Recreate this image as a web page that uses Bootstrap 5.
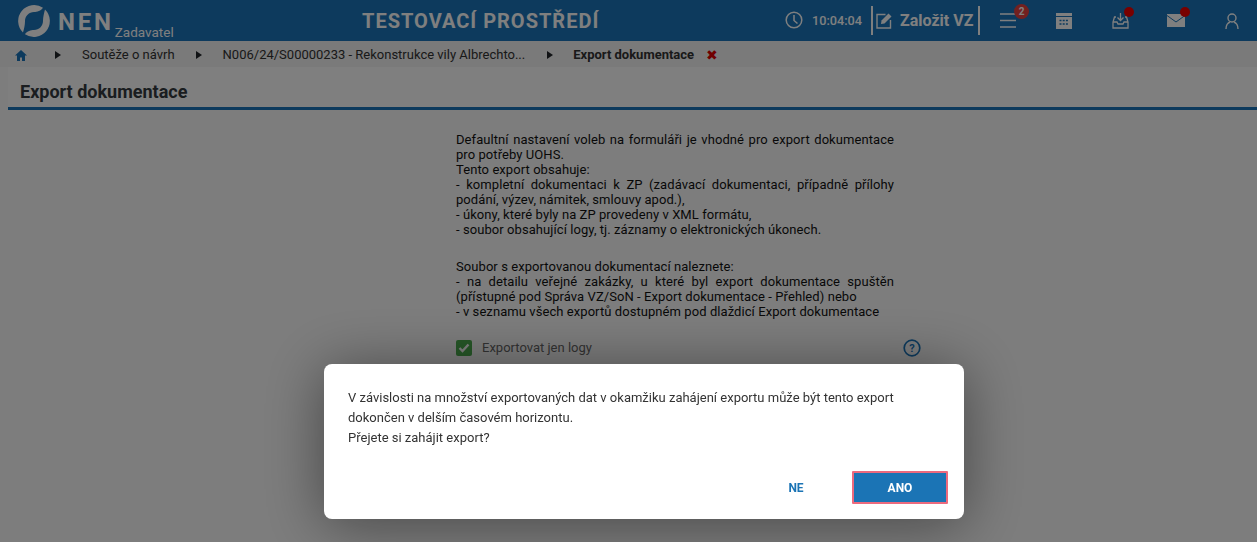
<!DOCTYPE html>
<html lang="cs">
<head>
    <meta charset="UTF-8" />
    <meta name="viewport" content="width=device-width, initial-scale=1" />
    <title>Export dokumentace</title>
    <link href="https://cdn.jsdelivr.net/npm/bootstrap@5.3.7/dist/css/bootstrap.min.css" rel="stylesheet" />
    <style>
        html, body { height: 542px; overflow: hidden; }
        body { font-family: Roboto, "Liberation Sans", sans-serif; background: #fbfbfb; color: #212529; }
        .top-head { height: 41px; background: #1a75bb; color: #fff; }
        .logo-zone { width: 180px; padding-left: 18px; }
        .logo-word { font-size: 24px; font-weight: 700; letter-spacing: 2.8px; line-height: 1; margin-left: 8px; margin-top: 2px; }
        .logo-role { font-size: 13.5px; align-self: flex-end; margin-left: 1px; line-height: 1; margin-bottom: 2px; }
        .env-title { width: 240px; margin-left: 182px; font-size: 20px; font-weight: 700; letter-spacing: 1px; white-space: nowrap; }
        .head-tools { margin-left: auto; margin-right: -3px; }
        .clock-box { font-size: 12.7px; font-weight: 500; width: 100px; padding-left: 14px; }
        .clock-box svg { margin-right: 9px; }
        .add-box { border-left: 2px solid #fff; border-right: 2px solid #fff; height: 29px; width: 109px; font-size: 16px; font-weight: 700; padding-left: 3px; white-space: nowrap; }
        .add-box svg { margin-right: 7px; }
        .tool-item { width: 56px; height: 41px; position: relative; }
        .dot-red { position: absolute; width: 10px; height: 10px; border-radius: 50%; background: #f00000; top: 7px; left: 32px; }
        .count-red { position: absolute; width: 15px; height: 15px; border-radius: 50%; background: #e5403f; top: 4px; left: 34px; font-size: 10px; font-weight: 700; line-height: 15px; text-align: center; }
        .crumb-bar { height: 26px; padding-top: 2px; background: #f4f4f4; font-size: 13px; color: #333; white-space: nowrap; }
        .crumb-arrow { width: 0; height: 0; border-left: 6px solid #212529; border-top: 4px solid transparent; border-bottom: 4px solid transparent; margin: 0 21px; }
        .crumb-home { margin-left: 15px; margin-right: 7px; }
        .crumb-long { margin-right: 1px; }
        .crumb-strong { font-weight: 700; margin-left: -1px; }
        .crumb-x { color: #e00000; margin-left: 12px; font-size: 14px; line-height: 1; }
        .page-zone { margin-left: 8px; }
        .page-title { height: 43px; border-bottom: 3px solid #1a75bb; background: #fff; font-size: 18px; font-weight: 700; padding-left: 12px; padding-top: 13px; line-height: 24px; color: #343a40; margin: 0; }
        .form-text-box { width: 438px; margin-left: 448px; margin-top: 22px; font-size: 13px; font-weight: 400; letter-spacing: .07px; line-height: 15px; text-align: justify; color: #111; }
        .form-text-part { margin-bottom: 22px; }
        .check-line { width: 465px; margin-left: 448px; margin-top: 20px; font-size: 13px; color: #666; position: relative; height: 18px; }
        .check-green { width: 16px; height: 16px; border-radius: 2px; background: #4cae4f; }
        .check-text { margin-left: 2px; }
        .check-help { position: absolute; right: 0; top: 0; }
        .dialog-box { position: fixed; z-index: 1060; left: 324px; top: 364px; width: 640px; height: 155px; background: #fff; border-radius: 8px; box-shadow: 0 5px 60px rgba(0,0,0,.45); font-size: 13px; line-height: 20px; color: #333; padding: 24px 24px 0; }
        .dialog-actions { margin-top: 23px; }
        .btn-ne { width: 106px; height: 33px; color: #1b74b5; font-size: 12px; font-weight: 700; border: 0; padding: 0; }
        .btn-ano, .btn-ano:hover { width: 96px; height: 33px; background: #1b74b5; color: #fff; font-size: 12px; font-weight: 700; border: 2px solid #ec6a7e; border-radius: 1px; padding: 0; margin-right: -8px; margin-left: 3px; }
    </style>
</head>
<body>
<header class="top-head d-flex align-items-center">
    <div class="logo-zone d-flex align-items-center h-100">
        <svg width="32" height="32" viewBox="0 0 32 32">
            <path fill="#fff" d="M25 2.8A16 16 0 0 0 5 27.6C6 24 7 20 7 16C7 11 11 7 16 7C19 7 23 6 25 2.8Z"/>
            <path fill="#fff" transform="rotate(180 16 16)" d="M25 2.8A16 16 0 0 0 5 27.6C6 24 7 20 7 16C7 11 11 7 16 7C19 7 23 6 25 2.8Z"/>
        </svg>
        <span class="logo-word">NEN</span>
        <span class="logo-role">Zadavatel</span>
    </div>
    <div class="env-title">TESTOVACÍ PROSTŘEDÍ</div>
    <div class="head-tools d-flex align-items-center">
        <div class="clock-box d-flex align-items-center">
            <svg width="18" height="18" viewBox="0 0 18 18" fill="none" stroke="#fff" stroke-width="1.5"><circle cx="9" cy="9" r="7.8"/><path d="M9 4V9.5L12.5 12.5"/></svg>
            10:04:04
        </div>
        <div class="add-box d-flex align-items-center">
            <svg width="17" height="17" viewBox="0 0 17 17" fill="none" stroke="#fff" stroke-width="1.4"><path d="M9.5 2.5H1V16H14.5V8"/><path d="M5 12L5.5 8.5L12.5 1.5L15.5 4.5L8.5 11.5Z" fill="#fff" stroke="none"/></svg>
            Založit VZ
        </div>
        <div class="tool-item d-flex align-items-center justify-content-center">
            <svg width="16" height="15" viewBox="0 0 16 15" stroke="#fff" stroke-width="1.5"><path d="M0 1H16M0 7.5H16M0 14H16"/></svg>
            <span class="count-red">2</span>
        </div>
        <div class="tool-item d-flex align-items-center justify-content-center">
            <svg width="16" height="16" viewBox="0 0 16 16"><path fill="#fff" d="M0 0H16V16H0Z"/><path d="M0 3.5H16" stroke="#1a75bb"/><path stroke="#1a75bb" stroke-width="1.6" stroke-dasharray="2 1.2" d="M3.5 7.5H12.5M3.5 11H12.5"/></svg>
        </div>
        <div class="tool-item d-flex align-items-center justify-content-center">
            <svg width="17" height="17" viewBox="0 0 17 17" fill="none" stroke="#fff" stroke-width="1.3"><path d="M8.5 1V8.5M5.5 5.5L8.5 8.5L11.5 5.5"/><path d="M4 5H2.5L1 10V16H16V10L14.5 5H13"/><path d="M1 10H5L6 12H11L12 10H16"/></svg>
            <span class="dot-red"></span>
        </div>
        <div class="tool-item d-flex align-items-center justify-content-center">
            <svg width="18" height="13" viewBox="0 0 18 13"><path fill="#fff" d="M0 0H18V13H0Z"/><path fill="none" stroke="#1a75bb" stroke-width="1" d="M0 1.5L9 8L18 1.5"/></svg>
            <span class="dot-red"></span>
        </div>
        <div class="tool-item d-flex align-items-center justify-content-center">
            <svg width="14" height="16" viewBox="0 0 14 16" fill="none" stroke="#fff" stroke-width="1.4"><circle cx="7" cy="5" r="4"/><path d="M1 16C1 11 3 10 5 9M13 16C13 11 11 10 9 9"/></svg>
        </div>
    </div>
</header>
<nav class="crumb-bar d-flex align-items-center">
    <svg class="crumb-home" width="12" height="11" viewBox="0 0 12 11"><path fill="#1a75bb" d="M6 0L12 5.5H10V11H7V7.5H5V11H2V5.5H0Z"/></svg>
    <span class="crumb-arrow"></span>
    <span>Soutěže o návrh</span>
    <span class="crumb-arrow"></span>
    <span class="crumb-long">N006/24/S00000233 - Rekonstrukce vily Albrechto...</span>
    <span class="crumb-arrow"></span>
    <span class="crumb-strong">Export dokumentace</span>
    <span class="crumb-x">&#10006;</span>
</nav>
<main class="page-zone">
    <h1 class="page-title">Export dokumentace</h1>
    <div class="form-text-box">
        <div class="form-text-part">
            Defaultní nastavení voleb na formuláři je vhodné pro export dokumentace pro potřeby UOHS.<br>
            Tento export obsahuje:<br>
            - kompletní dokumentaci k ZP (zadávací dokumentaci, případně přílohy podání, výzev, námitek, smlouvy apod.),<br>
            - úkony, které byly na ZP provedeny v XML formátu,<br>
            - soubor obsahující logy, tj. záznamy o elektronických úkonech.
        </div>
        <div>
            Soubor s exportovanou dokumentací naleznete:<br>
            - na detailu veřejné zakázky, u které byl export dokumentace spuštěn (přístupné pod Správa VZ/SoN - Export dokumentace - Přehled) nebo<br>
            - v seznamu všech exportů dostupném pod dlaždicí Export dokumentace
        </div>
    </div>
    <div class="check-line d-flex align-items-center gap-2">
        <span class="check-green d-flex align-items-center justify-content-center">
            <svg width="12" height="10" viewBox="0 0 12 10" fill="none" stroke="#fff" stroke-width="2.4"><path d="M1.5 5L4.5 8L10.5 1.5"/></svg>
        </span>
        <span class="check-text">Exportovat jen logy</span>
        <svg class="check-help" width="18" height="18" viewBox="0 0 18 18" fill="none" stroke="#1a75bb" stroke-width="1.7"><circle cx="9" cy="9" r="7.8"/><text x="9" y="13" text-anchor="middle" font-size="11" font-weight="700" font-family="Roboto" fill="#1a75bb" stroke="none">?</text></svg>
    </div>
</main>
<div class="modal-backdrop show"></div>
<div class="dialog-box">
    <div>V závislosti na množství exportovaných dat v okamžiku zahájení exportu může být tento export dokončen v delším časovém horizontu.<br>Přejete si zahájit export?</div>
    <div class="dialog-actions d-flex justify-content-end">
        <button type="button" class="btn btn-ne">NE</button>
        <button type="button" class="btn btn-ano">ANO</button>
    </div>
</div>
<script src="https://cdn.jsdelivr.net/npm/bootstrap@5.3.7/dist/js/bootstrap.bundle.min.js"></script>
</body>
</html>
